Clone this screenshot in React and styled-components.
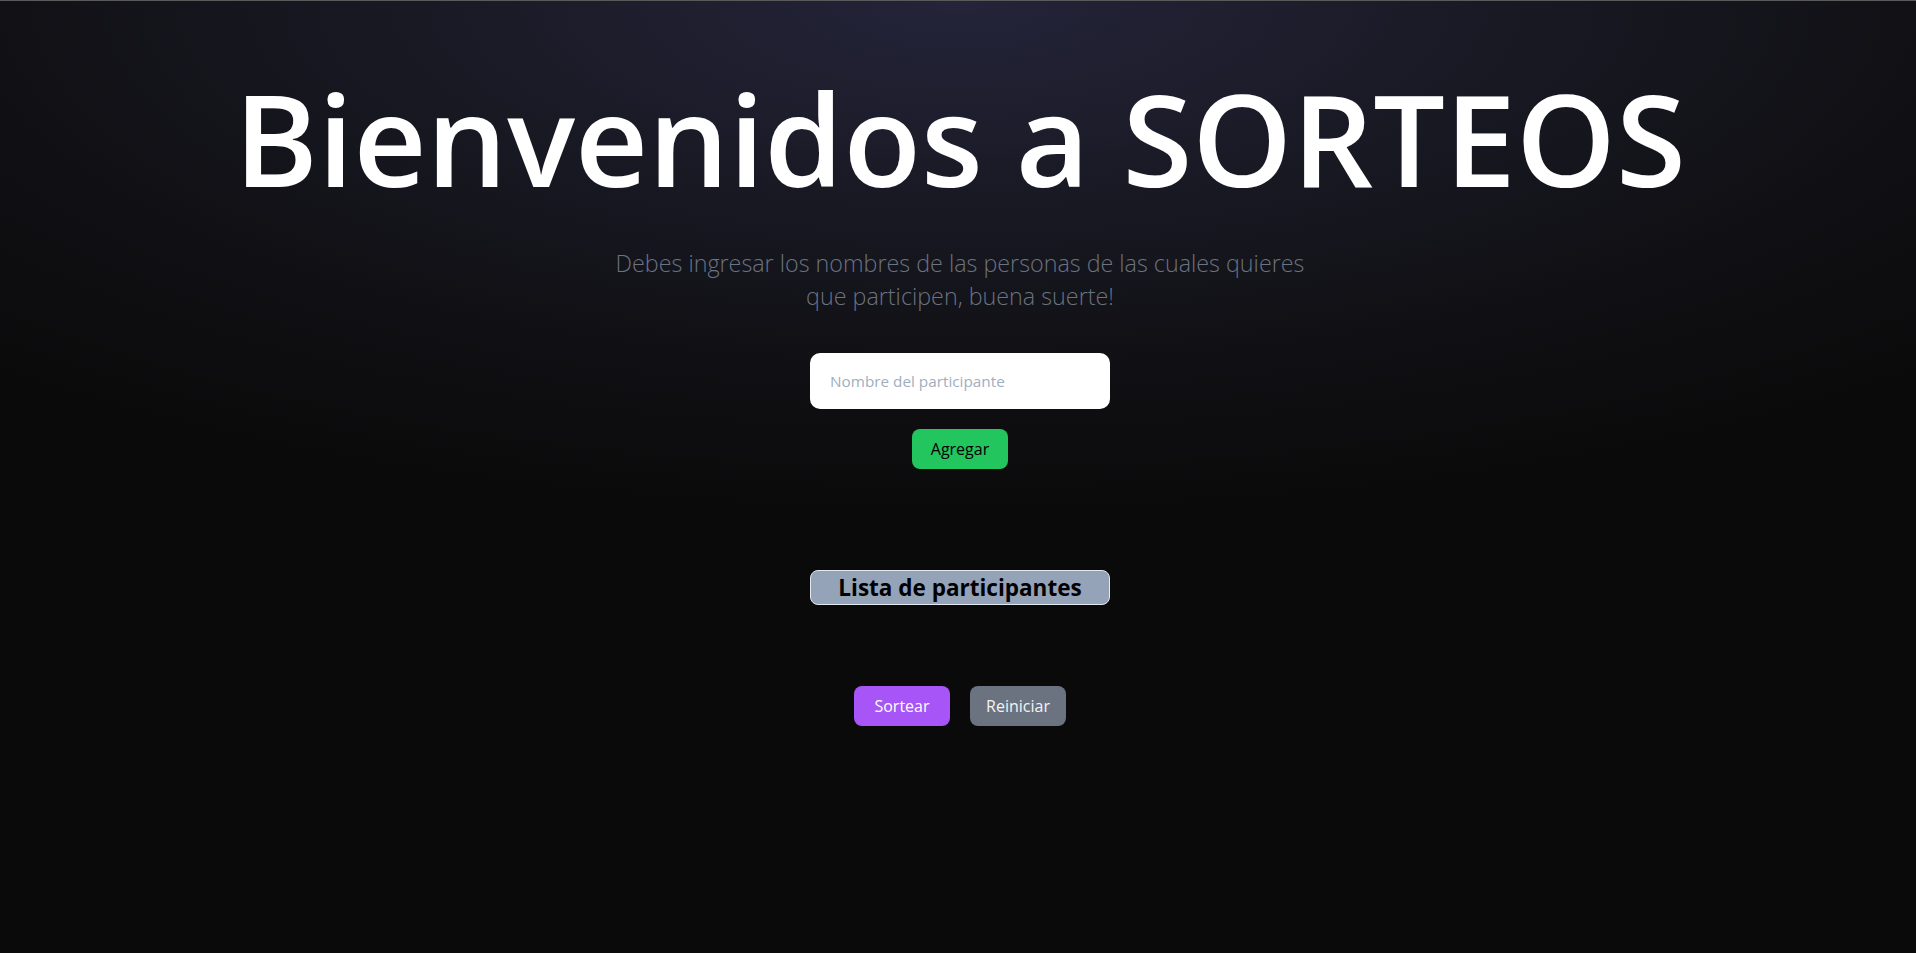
import React, { useState } from "react";
import styled, { createGlobalStyle } from "styled-components";

const GlobalStyle = createGlobalStyle`
  html, body {
    margin: 0;
    padding: 0;
    background: #0a0a0a;
  }
  body {
    font-family: "Open Sans", "Noto Sans", sans-serif;
  }
  * {
    box-sizing: border-box;
  }
`;

const Page = styled.main`
  min-height: 953px;
  border-top: 1px solid #5a5a5a;
  background: radial-gradient(
    ellipse 75% 55% at 50% 0%,
    #24243a 0%,
    #1a1a26 35%,
    #111116 65%,
    #0a0a0a 100%
  );
  display: flex;
  flex-direction: column;
  align-items: center;
  padding: 73px 0 0 4px;
`;

const Title = styled.h1`
  margin: 0;
  font-size: 127px;
  line-height: 128px;
  font-weight: 600;
  letter-spacing: 0;
  color: #ffffff;
  text-align: center;
`;

const Subtitle = styled.p`
  margin: 45px 0 0;
  max-width: 700px;
  font-size: 23.3px;
  line-height: 33px;
  font-weight: 300;
  color: #6b7280;
  text-align: center;
`;

const Form = styled.form`
  display: flex;
  flex-direction: column;
  align-items: center;
  gap: 20px;
  margin-top: 40px;
`;

const NameInput = styled.input`
  width: 300px;
  height: 56px;
  padding: 0 20px;
  border: none;
  border-radius: 10px;
  background: #ffffff;
  font-family: inherit;
  font-size: 15.3px;
  color: #111827;
  outline: none;
  &::placeholder {
    color: #a0aec0;
  }
`;

const Button = styled.button`
  width: 96px;
  height: 40px;
  border: none;
  border-radius: 8px;
  background: ${(p) => p.$bg};
  color: ${(p) => p.$fg};
  font-family: inherit;
  font-size: 16px;
  cursor: pointer;
`;

const ListSection = styled.section`
  margin-top: 101px;
  display: flex;
  flex-direction: column;
  align-items: center;
`;

const ListHeader = styled.h2`
  margin: 0;
  width: 300px;
  height: 35px;
  border: 1px solid #e2e8f0;
  border-radius: 8px;
  background: #94a3b8;
  color: #000000;
  font-size: 22.5px;
  line-height: 33px;
  font-weight: 700;
  text-align: center;
`;

const Actions = styled.div`
  display: flex;
  gap: 20px;
  margin-top: 81px;
`;

export default function App() {
  const [name, setName] = useState("");
  return (
    <>
      <GlobalStyle />
      <Page>
        <Title>Bienvenidos a SORTEOS</Title>
        <Subtitle>
          Debes ingresar los nombres de las personas de las cuales quieres que
          participen, buena suerte!
        </Subtitle>
        <Form onSubmit={(e) => e.preventDefault()}>
          <NameInput
            placeholder="Nombre del participante"
            value={name}
            onChange={(e) => setName(e.target.value)}
          />
          <Button type="submit" $bg="#22c55e" $fg="#000000">
            Agregar
          </Button>
        </Form>
        <ListSection>
          <ListHeader>Lista de participantes</ListHeader>
          <Actions>
            <Button $bg="#a855f7" $fg="#ffffff">
              Sortear
            </Button>
            <Button $bg="#6b7280" $fg="#f3f4f6">
              Reiniciar
            </Button>
          </Actions>
        </ListSection>
      </Page>
    </>
  );
}
